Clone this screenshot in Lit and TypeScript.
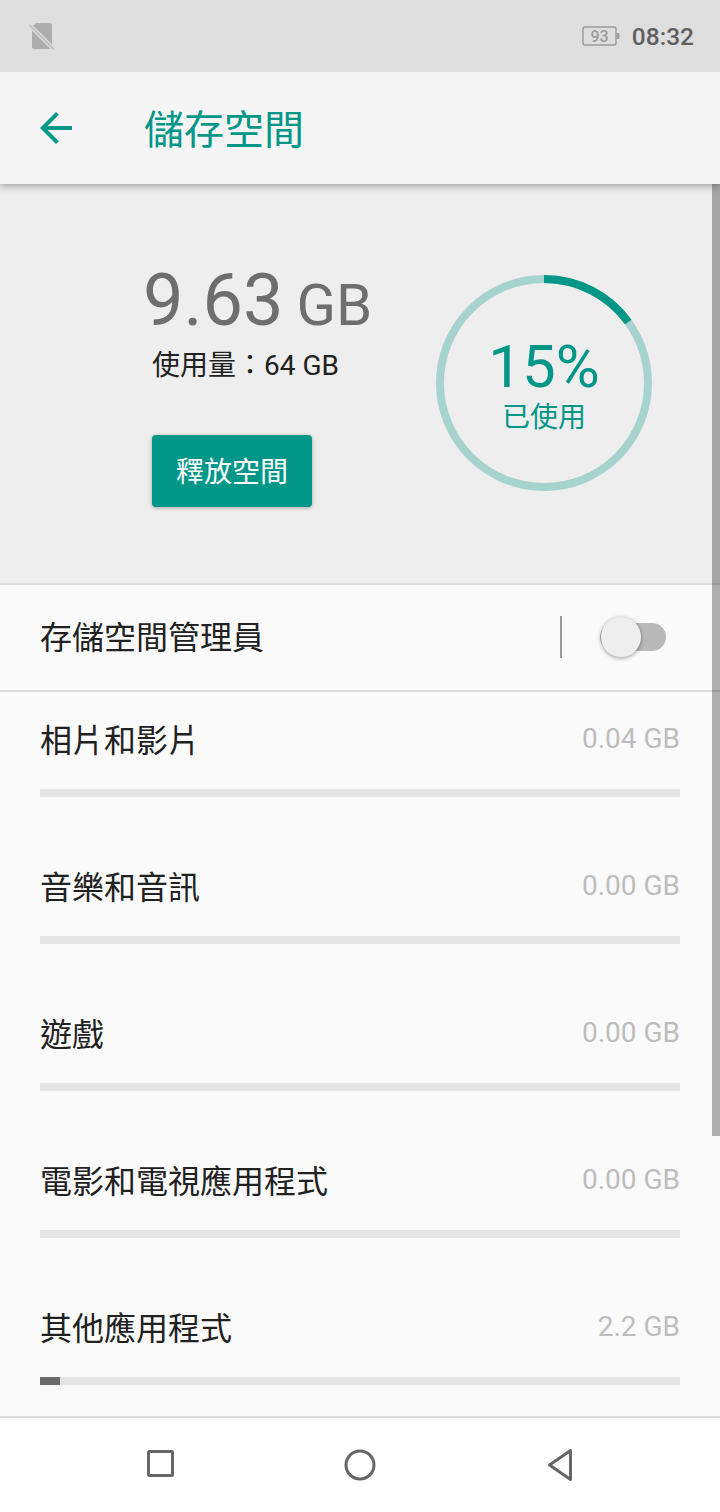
import {LitElement, html, css, svg} from 'lit';
import {customElement} from 'lit/decorators.js';

const rows = [
    {name: "相片和影片", size: "0.04 GB", used: 0},
    {name: "音樂和音訊", size: "0.00 GB", used: 0},
    {name: "遊戲", size: "0.00 GB", used: 0},
    {name: "電影和電視應用程式", size: "0.00 GB", used: 0},
    {name: "其他應用程式", size: "2.2 GB", used: 3.125},
];

@customElement('app-root')
class AppRoot extends LitElement {
    static styles = css`
:host {
display: block;
width: 720px;
height: 1512px;
overflow: hidden;
position: relative;
font-family: Roboto, "Noto Sans CJK TC", sans-serif;
background-color: #fafafa;
}
.page {
display: flex;
flex-direction: column;
height: 1512px;
}
.status {
height: 72px;
flex: none;
background-color: #dedede;
display: flex;
align-items: center;
padding: 0 26px 0 26px;
box-sizing: border-box;
position: relative;
z-index: 3;
}
.status .sim {
display: block;
}
.battery {
margin-left: auto;
display: block;
}
.time {
margin-left: 12px;
font-size: 24.5px;
font-weight: 500;
color: #5f5f5f;
}
.appbar {
height: 112px;
flex: none;
background-color: #f5f5f5;
box-shadow: 0 2px 8px rgba(0, 0, 0, 0.35);
display: flex;
align-items: center;
padding-left: 32px;
position: relative;
z-index: 2;
}
.appbar h1 {
margin: 6px 0 0 64px;
font-size: 40px;
font-weight: 400;
color: #009688;
line-height: 56px;
}
.summary {
height: 401px;
flex: none;
box-sizing: border-box;
background-color: #eeeeee;
border-bottom: 2px solid #dcdcdc;
display: flex;
padding: 77px 0 0 143px;
}
.usage {
width: 293px;
flex: none;
}
.amount {
font-size: 72px;
line-height: 80px;
color: #6e6e6e;
white-space: nowrap;
}
.amount span {
font-size: 58px;
margin-left: 13px;
}
.capacity {
margin: 1px 0 0 9px;
font-size: 28px;
line-height: 40px;
color: #212121;
}
.free {
display: block;
margin: 49px 0 0 9px;
width: 160px;
height: 72px;
padding: 0 0 3px;
border: none;
border-radius: 4px;
background-color: #009688;
color: #ffffff;
font: inherit;
font-size: 28px;
box-shadow: 0 1px 4px rgba(0, 0, 0, 0.3);
}
.ring {
width: 216px;
height: 216px;
margin-top: 14px;
position: relative;
color: #009688;
}
.ring svg {
display: block;
}
.ring-text {
position: absolute;
inset: 0;
padding-top: 8px;
display: flex;
flex-direction: column;
align-items: center;
justify-content: center;
}
.percent {
font-size: 60px;
line-height: 65px;
margin-top: -3px;
}
.ring-label {
font-size: 28px;
line-height: 38px;
}
.manager {
height: 107px;
flex: none;
box-sizing: border-box;
border-bottom: 2px solid #dcdcdc;
padding: 0 54px 2px 40px;
display: flex;
align-items: center;
font-size: 32px;
color: #212121;
}
.manager span {
margin-bottom: 2px;
margin-top: -2px;
}
.divider {
margin-left: auto;
width: 2px;
height: 42px;
background-color: #9a9a9a;
}
.switch {
margin-left: 38px;
width: 66px;
height: 28px;
position: relative;
border-radius: 14px;
background-color: #b9b9b9;
}
.knob {
position: absolute;
left: 1px;
top: -6px;
width: 40px;
height: 40px;
border-radius: 50%;
background-color: #eeeeee;
box-shadow: 0 1px 4px rgba(0, 0, 0, 0.4);
}
.list {
flex: 1;
overflow: hidden;
}
.row {
height: 147px;
box-sizing: border-box;
padding: 27px 40px 0;
}
.row-head {
display: flex;
justify-content: space-between;
height: 44px;
line-height: 44px;
margin-bottom: 26px;
}
.row-name {
font-size: 32px;
color: #212121;
}
.row-size {
font-size: 28px;
color: #bdbdbd;
line-height: 40px;
}
.bar {
height: 8px;
background-color: #e4e4e4;
}
.bar div {
height: 8px;
background-color: #6b6b6b;
}
.nav {
height: 96px;
flex: none;
box-sizing: border-box;
background-color: #ffffff;
border-top: 2px solid #dcdcdc;
display: flex;
justify-content: center;
}
.nav svg {
display: block;
}
.scrollbar {
position: absolute;
right: 0;
top: 184px;
width: 8px;
height: 952px;
background-color: rgba(0, 0, 0, 0.3);
z-index: 1;
}
`;

    ring() {
	const r = 104;
	const len = 2 * Math.PI * r;
	const used = len * 0.15;
	return svg`<svg width="216" height="216" viewBox="0 0 216 216">
	    <circle cx="108" cy="108" r=${r} fill="none" stroke="#a7d3cf" stroke-width="8"></circle>
	    <circle cx="108" cy="108" r=${r} fill="none" stroke="#009688" stroke-width="8"
		stroke-dasharray="${used} ${len}" transform="rotate(-90 108 108)"></circle>
	</svg>`;
    }

    row(r: {name: string, size: string, used: number}) {
	return html`<div class="row">
	    <div class="row-head">
		<span class="row-name">${r.name}</span>
		<span class="row-size">${r.size}</span>
	    </div>
	    <div class="bar"><div style="width: ${r.used}%"></div></div>
	</div>`;
    }

    render() {
	return html`<div class="page">
	    <div class="status">
		<svg class="sim" width="32" height="32" viewBox="0 0 32 32">
		    <g transform="translate(0 3)">
			<path d="M10 0H24a2 2 0 0 1 2 2V24a2 2 0 0 1-2 2H8a2 2 0 0 1-2-2V4z" fill="#adadad"></path>
			<path d="M3.5 2L28 26.5" stroke="#dedede" stroke-width="4.5"></path>
			<path d="M3.5 2L28 26.5" stroke="#c2c2c2" stroke-width="2"></path>
		    </g>
		</svg>
		<svg class="battery" width="38" height="20" viewBox="0 0 38 20">
		    <rect x="1" y="1" width="33" height="18" rx="2" fill="none" stroke="#9c9c9c" stroke-width="1.5"></rect>
		    <path d="M35 7h1.5a1 1 0 0 1 1 1v4a1 1 0 0 1-1 1H35z" fill="#9c9c9c"></path>
		    <text x="17.5" y="15.5" text-anchor="middle" font-size="16" font-weight="500" fill="#9c9c9c">93</text>
		</svg>
		<span class="time">08:32</span>
	    </div>
	    <div class="appbar">
		<svg width="48" height="48" viewBox="0 0 24 24"><path fill="#009688" d="M20 11H7.83l5.59-5.59L12 4l-8 8 8 8 1.41-1.41L7.83 13H20v-2z"></path></svg>
		<h1>儲存空間</h1>
	    </div>
	    <div class="summary">
		<div class="usage">
		    <div class="amount">9.63<span>GB</span></div>
		    <div class="capacity">使用量：64 GB</div>
		    <button class="free">釋放空間</button>
		</div>
		<div class="ring">
		    ${this.ring()}
		    <div class="ring-text">
			<div class="percent">15%</div>
			<div class="ring-label">已使用</div>
		    </div>
		</div>
	    </div>
	    <div class="manager">
		<span>存儲空間管理員</span>
		<div class="divider"></div>
		<div class="switch"><div class="knob"></div></div>
	    </div>
	    <div class="list">${rows.map((r) => this.row(r))}</div>
	    <div class="nav">
		<svg width="720" height="94" viewBox="0 0 720 94">
		    <rect x="148.5" y="33.5" width="24" height="24" rx="1" fill="none" stroke="#666666" stroke-width="3"></rect>
		    <circle cx="360" cy="47" r="14" fill="none" stroke="#666666" stroke-width="3"></circle>
		    <path d="M570.5 32.5V61.5L549.5 47z" fill="none" stroke="#666666" stroke-width="3" stroke-linejoin="round"></path>
		</svg>
	    </div>
	</div>
	<div class="scrollbar"></div>`;
    }
}
